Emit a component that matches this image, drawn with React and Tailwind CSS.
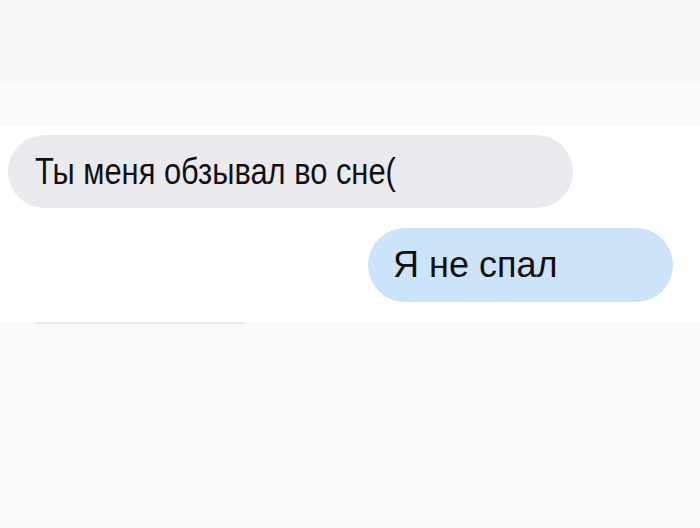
import React from 'react';

export default function App() {
  return (
    <div className="w-[700px] h-[528px] flex flex-col bg-[#fafafa] font-['Liberation_Sans',Arial,sans-serif] text-[#111]">
      {/* header strip */}
      <div className="h-[84px] shrink-0 bg-[#f7f7f8]" />
      <div className="h-[42px] shrink-0 bg-[#fafafa]" />

      {/* conversation */}
      <div className="h-[196px] shrink-0 bg-white flex flex-col pt-[9px]">
        <div className="ml-[8px] w-[565px] h-[73px] rounded-full bg-[#e9e9ee] flex items-center pl-[27px]">
          <span className="inline-block origin-left scale-x-[0.857] whitespace-nowrap text-[36px] leading-none">
            Ты меня обзывал во сне(
          </span>
        </div>
        <div className="mt-[20px] ml-[368px] w-[305px] h-[74px] rounded-full bg-[#cce3fa] flex items-center pl-[25px]">
          <span className="text-[36px] leading-none">Я не спал</span>
        </div>
      </div>

      {/* next message, cut off */}
      <div className="flex-1 bg-[#fafafa]">
        <div className="ml-[35px] w-[210px] h-[2px] rounded-full bg-[#ececec]" />
      </div>
    </div>
  );
}
